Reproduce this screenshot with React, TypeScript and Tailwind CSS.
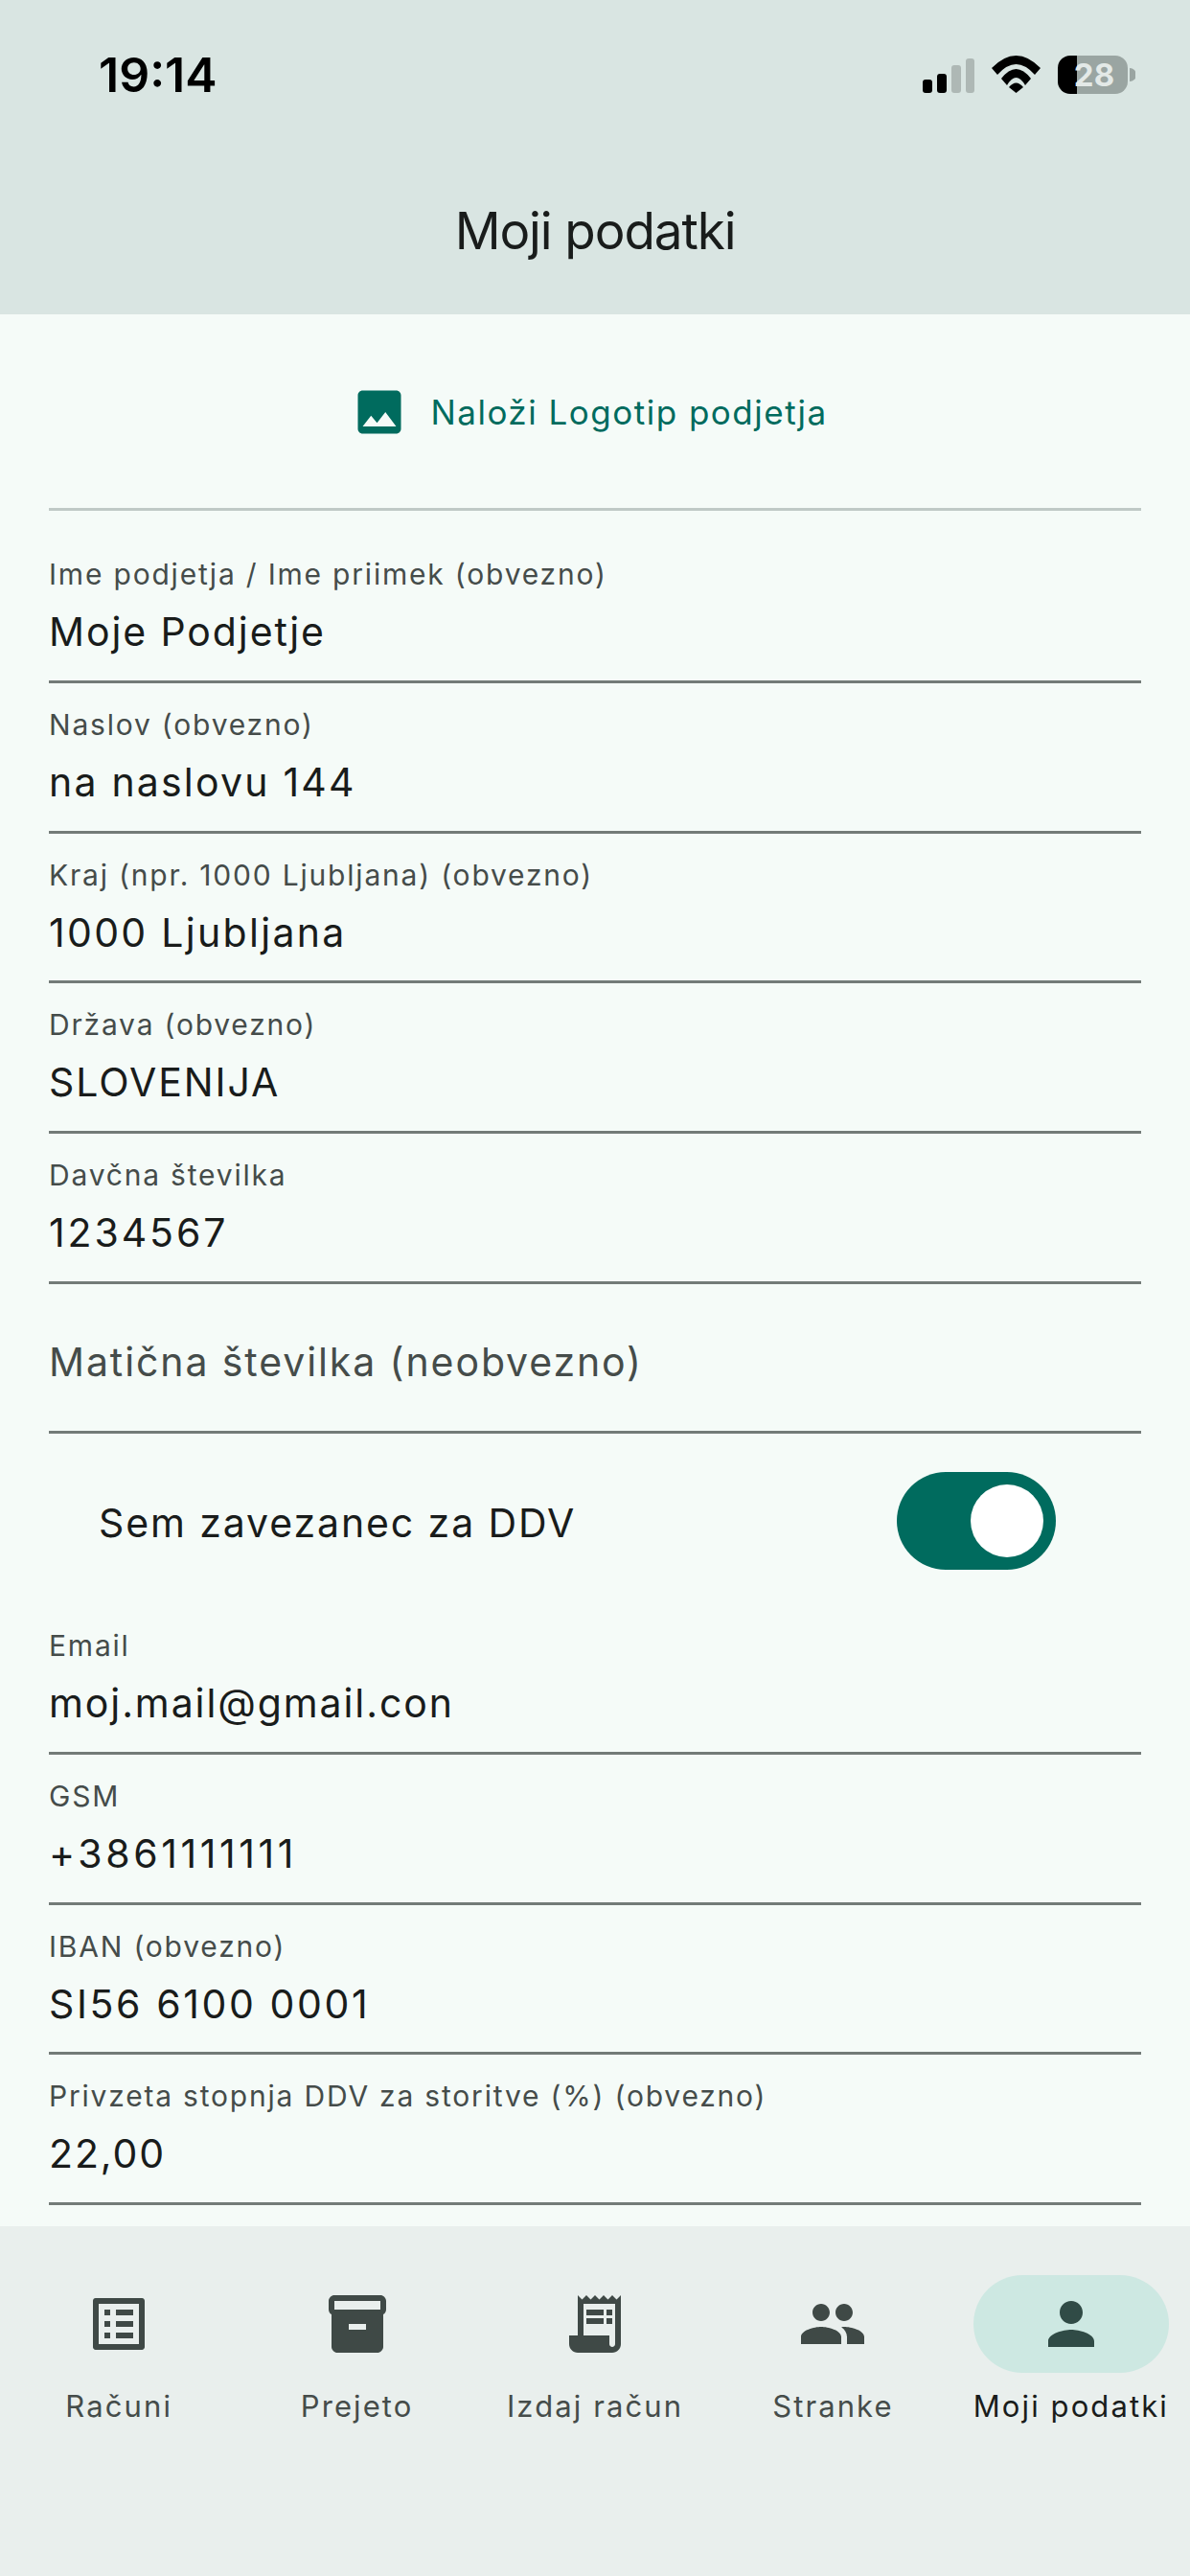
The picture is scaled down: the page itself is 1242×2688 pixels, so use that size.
import { MdImage, MdOutlineListAlt, MdInventory2, MdReceiptLong, MdPeople, MdPerson } from "react-icons/md";

function Field({ label, value, first, track = "tracking-[1.9px]" }: { label: string; value: string; first?: boolean; track?: string }) {
  return (
    <div className={`border-b-[3px] border-[#737b78] flex flex-col ${first ? "h-[180px] pt-[49px]" : "h-[156.67px] pt-[26px]"}`}>
      <div className="text-[30px] leading-[34px] tracking-[1.8px] text-[#454c4a]">{label}</div>
      <div className={`mt-[19px] text-[41px] leading-[48px] text-[#191c1b] ${track}`}>{value}</div>
    </div>
  );
}

function Empty({ label }: { label: string }) {
  return (
    <div className="h-[156.67px] border-b-[3px] border-[#737b78] flex items-center pt-[10px]">
      <div className="text-[41px] leading-[48px] tracking-[1.9px] text-[#454c4a]">{label}</div>
    </div>
  );
}

function NavItem({ icon, label, active }: { icon: React.ReactNode; label: string; active?: boolean }) {
  return (
    <div className="flex-1 flex flex-col items-center">
      <div className={`w-[204px] h-[102px] rounded-[51px] flex items-center justify-center ${active ? "bg-[#cde8e2] text-[#304b46]" : "text-[#3f4946]"}`}>
        {icon}
      </div>
      <div className={`mt-[15px] text-[31px] leading-[40px] tracking-[2.1px] whitespace-nowrap ${active ? "text-[#191c1b]" : "text-[#454c4a]"}`}>{label}</div>
    </div>
  );
}

function StatusBar() {
  return (
    <div className="h-[148px] flex items-center justify-between pl-[103px] pr-[57px] pt-[8px]">
      <span className="text-[50px] font-semibold text-black leading-none">19:14</span>
      <svg width="222" height="40" viewBox="0 0 222 40">
        <rect x="0" y="25" width="10" height="14" rx="3" fill="#000" />
        <rect x="15" y="19" width="10" height="20" rx="3" fill="#000" />
        <rect x="30" y="10" width="10" height="29" rx="3" fill="#aeb8b5" />
        <rect x="45" y="3" width="9" height="36" rx="3" fill="#aeb8b5" />
        <path d="M72 13 Q97.5 -13 123 13 L117 20 Q97.5 -2 78 20 Z" fill="#000" />
        <path d="M82 24 Q97.5 4 113 24 L107 31 Q97.5 15 88 31 Z" fill="#000" />
        <path d="M90 33 Q97.5 24 105 33 L97.5 39 Z" fill="#000" />
        <path d="M154 0 H161 V40 H154 A13 13 0 0 1 141 27 V13 A13 13 0 0 1 154 0 Z" fill="#000" />
        <path d="M161 0 H201 A13 13 0 0 1 214 13 V27 A13 13 0 0 1 201 40 H161 Z" fill="#9aa5a2" />
        <path d="M216 13 A7 7 0 0 1 216 27 Z" fill="#9aa5a2" />
        <text x="179" y="32" textAnchor="middle" fontFamily="Inter, sans-serif" fontWeight="700" fontSize="33" fill="#e3e9e7">28</text>
      </svg>
    </div>
  );
}

export default function App() {
  return (
    <div className="w-[1242px] h-[2688px] flex flex-col bg-[#f5fbf8] overflow-hidden font-['Inter',sans-serif]">
      <header className="h-[328px] shrink-0 bg-[#d9e5e2]">
        <StatusBar />
        <div className="flex justify-center pt-[55px]">
          <span className="text-[53px] leading-[76px] text-[#191c1b] tracking-[-1.1px]">Moji podatki</span>
        </div>
      </header>

      <main className="flex-1 px-[51px]">
        <div className="h-[205px] border-b-[3px] border-[#bfc9c6] flex items-center justify-center gap-[23px] pt-[2px] pr-[12px]">
          <MdImage size={60} className="text-[#006b5e]" />
          <span className="text-[35px] leading-[44px] tracking-[1.5px] text-[#006b5e]">Naloži Logotip podjetja</span>
        </div>
        <Field first label="Ime podjetja / Ime priimek (obvezno)" value="Moje Podjetje" />
        <Field label="Naslov (obvezno)" value="na naslovu 144" track="tracking-[2.2px]" />
        <Field label="Kraj (npr. 1000 Ljubljana) (obvezno)" value="1000 Ljubljana" track="tracking-[2.3px]" />
        <Field label="Država (obvezno)" value="SLOVENIJA" />
        <Field label="Davčna številka" value="1234567" track="tracking-[2.9px]" />
        <Empty label="Matična številka (neobvezno)" />
        <div className="h-[178px] flex items-center justify-between pl-[52px] pr-[89px] pt-[4px]">
          <span className="mt-[4px] text-[41px] tracking-[1.9px] text-[#191c1b]">Sem zavezanec za DDV</span>
          <div className="w-[166px] h-[102px] rounded-[51px] bg-[#006b5e] flex items-center justify-end pr-[13px]">
            <div className="w-[76px] h-[76px] rounded-full bg-white" />
          </div>
        </div>
        <Field label="Email" value="moj.mail@gmail.con" />
        <Field label="GSM" value="+3861111111" track="tracking-[3.6px]" />
        <Field label="IBAN (obvezno)" value="SI56 6100 0001" track="tracking-[2.6px]" />
        <Field label="Privzeta stopnja DDV za storitve (%) (obvezno)" value="22,00" />
      </main>

      <nav className="h-[365px] shrink-0 bg-[#e9efed] flex pt-[51px]">
        <NavItem icon={<MdOutlineListAlt size={72} />} label="Računi" />
        <NavItem icon={<MdInventory2 size={72} />} label="Prejeto" />
        <NavItem icon={<MdReceiptLong size={72} />} label="Izdaj račun" />
        <NavItem icon={<MdPeople size={72} />} label="Stranke" />
        <NavItem icon={<MdPerson size={72} />} label="Moji podatki" active />
      </nav>
    </div>
  );
}
